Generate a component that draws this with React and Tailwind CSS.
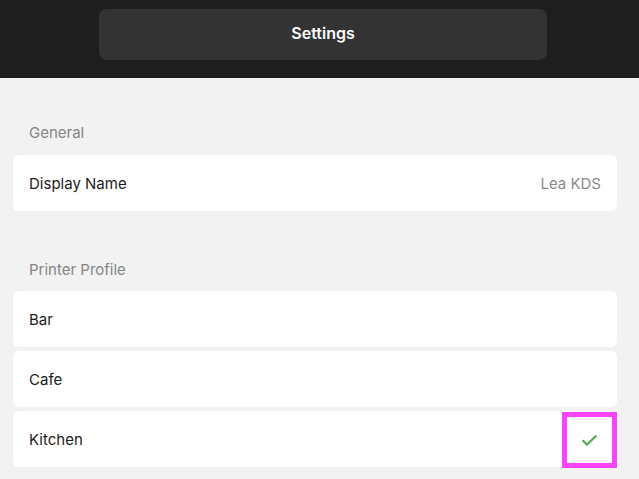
const GENERAL = [{ label: "Display Name", value: "Lea KDS" }];
const PRINTERS = ["Bar", "Cafe", "Kitchen"];

function Row({ label, value, selected }) {
  return (
    <div className="relative flex h-[56px] items-center justify-between rounded-md bg-white px-4 pt-[3px]">
      <span className="text-[15px] text-[#1c1c1c]">{label}</span>
      {value && <span className="text-[15px] text-[#8a8a8a]">{value}</span>}
      {selected && (
        <div className="absolute right-0 top-[1px] flex h-[56px] w-[55px] items-center justify-center border-[5px] border-[#fd43fd] bg-white">
          <svg width="17" height="12" viewBox="0 0 17 12" fill="none">
            <path d="M1.5 6.2 L6 10.5 L15.5 1.5" stroke="#4caf50" strokeWidth="2.2" />
          </svg>
        </div>
      )}
    </div>
  );
}

export default function App() {
  return (
    <div className="h-[479px] w-[639px] overflow-hidden bg-[#f2f2f2] font-['Inter',sans-serif]">
      {/* Header */}
      <div className="h-[78px] bg-[#1e1e1e] px-[99px] pt-[9px]">
        <div className="flex h-[51px] w-[448px] items-center justify-center rounded-lg bg-[#333333] pb-[3px]">
          <span className="text-[16px] font-semibold text-white">Settings</span>
        </div>
      </div>

      <div className="px-[13px] pr-[22px]">
        <div className="pl-4 pt-[45px] pb-[12px] text-[15px] leading-[20px] text-[#858585]">
          General
        </div>
        <div className="flex flex-col gap-1">
          {GENERAL.map((r) => (
            <Row key={r.label} label={r.label} value={r.value} />
          ))}
        </div>

        <div className="pl-4 pt-[49px] pb-[11px] text-[15px] leading-[20px] text-[#858585]">
          Printer Profile
        </div>
        <div className="flex flex-col gap-1">
          {PRINTERS.map((p) => (
            <Row key={p} label={p} selected={p === "Kitchen"} />
          ))}
        </div>
      </div>
    </div>
  );
}
